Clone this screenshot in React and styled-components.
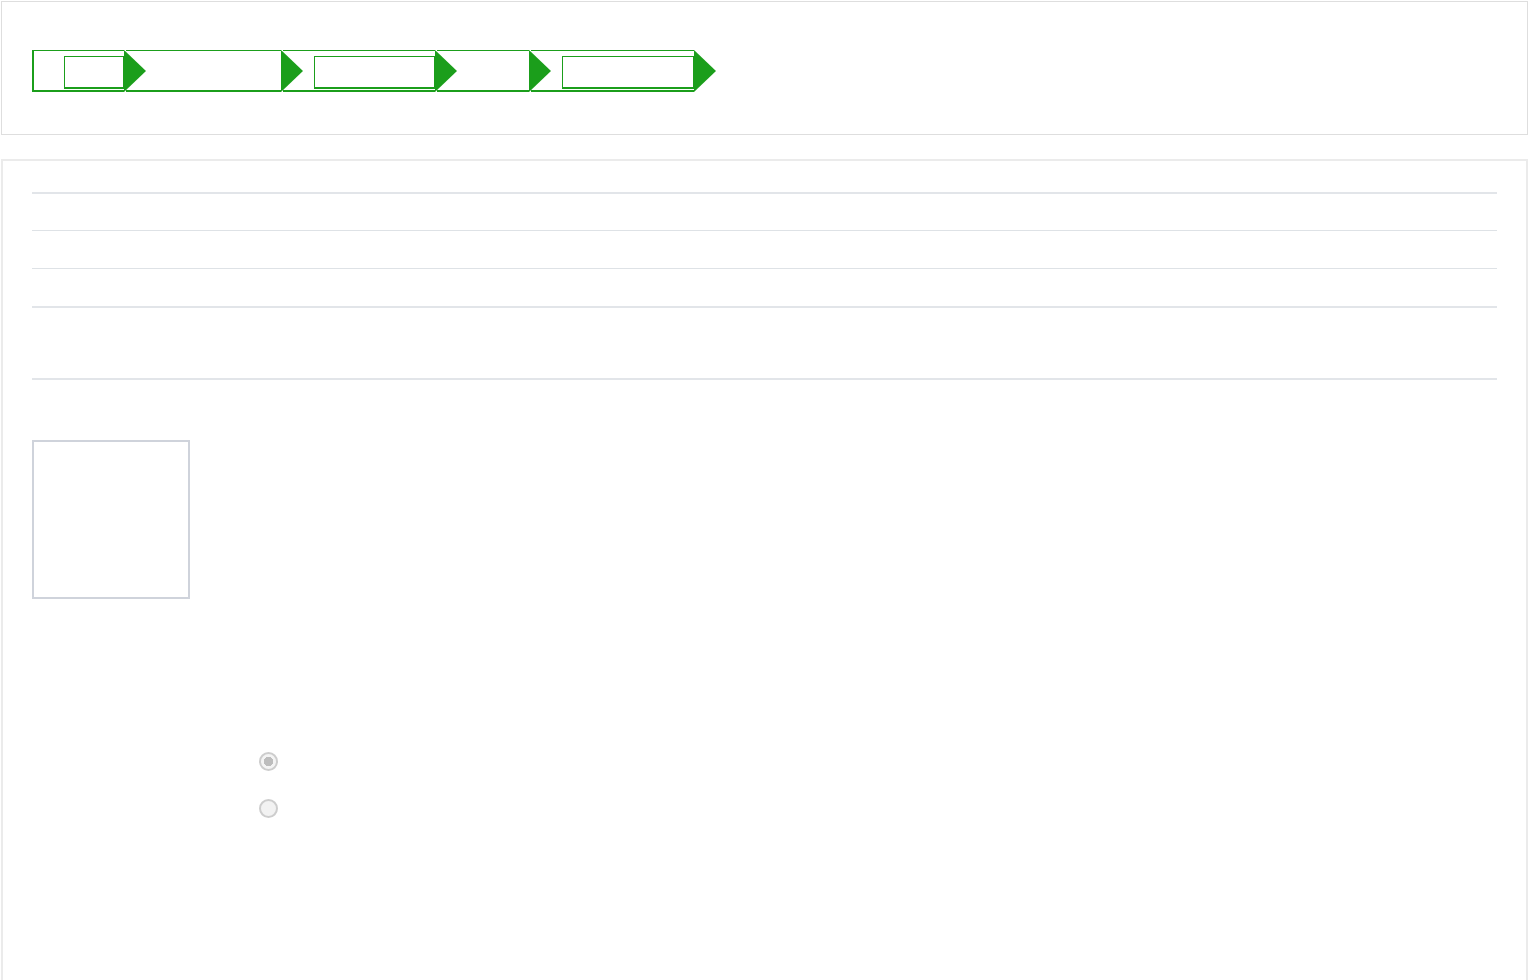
import React from "react";
import styled, { createGlobalStyle } from "styled-components";

const GREEN = "#1b9e1b";

const steps = [
  { width: 92, boxed: true },
  { width: 155, boxed: false },
  { width: 152, boxed: true },
  { width: 92, boxed: false },
  { width: 163, boxed: true },
];

const rows = [31, 36, 37, 37, 70];

function App() {
  return (
    <>
      <GlobalStyle />
      <Page>
        <Header>
          <Steps>
            {steps.map((s, i) => (
              <Step key={i} $w={s.width} $first={i === 0}>
                {s.boxed && <StepLabel />}
              </Step>
            ))}
          </Steps>
        </Header>

        <Body>
          <Table>
            {rows.map((h, i) => (
              <Row key={i} $h={h} $thick={i === 0 || i >= 3} />
            ))}
          </Table>

          <Thumb />

          <Options>
            <Radio type="radio" name="choice" defaultChecked disabled />
            <Radio type="radio" name="choice" disabled />
          </Options>
        </Body>
      </Page>
    </>
  );
}

export default App;

const GlobalStyle = createGlobalStyle`
  html, body {
    margin: 0;
    padding: 0;
    overflow: hidden;
    background: #fff;
    font-family: "Liberation Sans", Arial, sans-serif;
  }
  * {
    box-sizing: border-box;
  }
`;

const Page = styled.div`
  padding: 1px 0 0 1px;
`;

const Header = styled.section`
  border: 1px solid #dedede;
  padding: 48px 30px 42px 30px;
`;

const Steps = styled.ol`
  display: flex;
  gap: 2px;
  margin: 0;
  padding: 0;
  list-style: none;
  height: 42px;
`;

const Step = styled.li`
  position: relative;
  display: flex;
  align-items: flex-start;
  width: ${(p) => p.$w}px;
  height: 42px;
  border-top: 1px solid ${GREEN};
  border-bottom: 2px solid ${GREEN};
  border-left: ${(p) => (p.$first ? `2px solid ${GREEN}` : "none")};
  padding: 5px 0 0 ${(p) => (p.$first ? 30 : 31)}px;

  &::after {
    content: "";
    position: absolute;
    top: -1px;
    right: -22px;
    width: 0;
    height: 0;
    border-left: 22px solid ${GREEN};
    border-top: 21px solid transparent;
    border-bottom: 21px solid transparent;
    z-index: 1;
  }
`;

const StepLabel = styled.span`
  flex: 1;
  height: 33px;
  border: 1px solid ${GREEN};
  border-bottom-width: 2px;
`;

const Body = styled.section`
  margin-top: 24px;
  min-height: 900px;
  border: 2px solid #ebebeb;
  padding: 0 29px 0 29px;
`;

const Table = styled.div`
  display: flex;
  flex-direction: column;
`;

const Row = styled.div`
  height: ${(p) => p.$h + (p.$thick ? 2 : 1)}px;
  border-bottom: ${(p) => (p.$thick ? "2px solid #e2e5e9" : "1px solid #dee2e6")};
`;

const Thumb = styled.div`
  margin-top: 60px;
  width: 158px;
  height: 159px;
  border: 2px solid #cfd3db;
`;

const Options = styled.div`
  display: flex;
  flex-direction: column;
  gap: 28px;
  margin: 153px 0 0 227px;
`;

const Radio = styled.input`
  appearance: none;
  margin: 0;
  width: 19px;
  height: 19px;
  border-radius: 50%;
  border: 2px solid #cdcdcd;
  background: #f2f2f2;

  &:checked {
    background: radial-gradient(circle, #bdbdbd 0 4.5px, #f4f4f4 5px);
  }
`;
